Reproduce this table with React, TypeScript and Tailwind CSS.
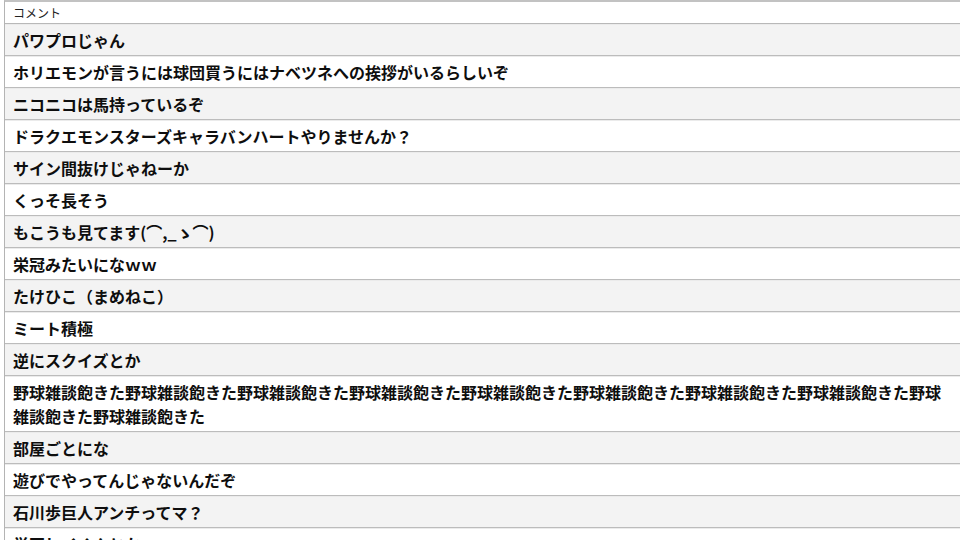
import React from 'react';

const comments: string[] = [
  'パワプロじゃん',
  'ホリエモンが言うには球団買うにはナベツネへの挨拶がいるらしいぞ',
  'ニコニコは馬持っているぞ',
  'ドラクエモンスターズキャラバンハートやりませんか？',
  'サイン間抜けじゃねーか',
  'くっそ長そう',
  'もこうも見てます(⌒,_ゝ⌒)',
  '栄冠みたいになｗｗ',
  'たけひこ（まめねこ）',
  'ミート積極',
  '逆にスクイズとか',
  '野球雑談飽きた'.repeat(10),
  '部屋ごとにな',
  '遊びでやってんじゃないんだぞ',
  '石川歩巨人アンチってマ？',
  '単回ヒイくんとか',
];

const App: React.FC = () => {
  return (
    <div
      className="w-[960px] h-[540px] overflow-hidden bg-white pl-1"
      style={{ fontFamily: '"Noto Sans CJK JP", "Noto Sans", sans-serif' }}
    >
      <div className="h-full border-l border-[#b4b4b4] border-t-2 border-t-[#c2c2c2]">
        {/* ヘッダー */}
        <div className="h-[22px] flex items-center px-2 text-[12px] text-[#222] border-b border-[#b8b8b8] bg-white">
          コメント
        </div>

        {/* コメント一覧 */}
        {comments.map((text, i) => (
          <div
            key={i}
            className={`px-2 py-[3px] border-t border-t-[#ebebeb] border-b border-b-[#bcbcbc] text-[16px] leading-6 font-bold text-[#0e0e0e] break-all ${
              i % 2 === 0 ? 'bg-[#f3f3f3]' : 'bg-white'
            }`}
          >
            {text}
          </div>
        ))}
      </div>
    </div>
  );
};

export default App;
